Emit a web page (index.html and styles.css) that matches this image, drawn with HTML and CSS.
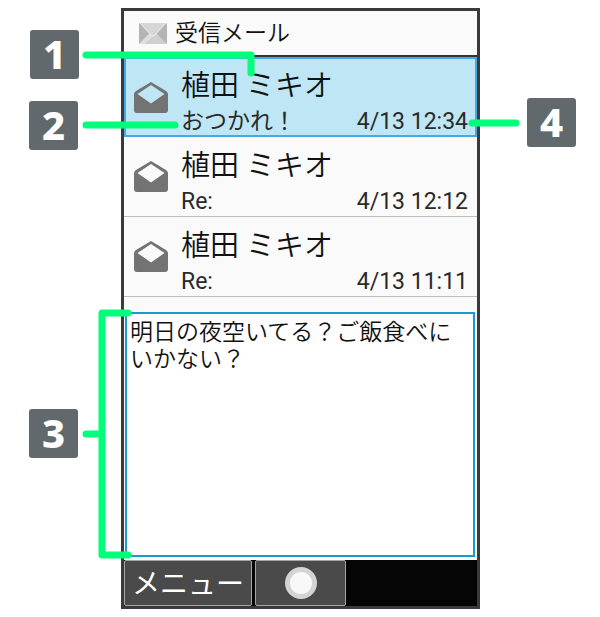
FILE: index.html
```html
<!DOCTYPE html>
<html lang="ja">
<head>
    <meta charset="UTF-8">
    <meta name="viewport" content="width=device-width, initial-scale=1.0">
    <title>受信メール</title>
    <link rel="stylesheet" href="styles.css">
</head>
<body>
    <!-- 開封済みアイコン -->
    <svg class="defs" width="0" height="0" aria-hidden="true">
        <symbol id="mailOpen" viewBox="0 0 34 31">
            <path fill="#737373" fill-rule="evenodd" d="M17 0 L32 9 Q34 10.500 34 12 V28 Q34 31 31 31 H3 Q0 31 0 28 V12 Q0 10.500 2 9 Z M17 3 L3.500 12 L17 21.500 L30.500 12 Z"/>
        </symbol>
    </svg>

    <div class="figure">
        <main class="phone">
            <header class="titleBar">
                <svg class="titleIcon" viewBox="0 0 28 21" aria-hidden="true">
                    <rect width="28" height="21" rx="1" fill="#b4b4b4"/>
                    <path d="M0 21 L10 11 H18 L28 21 Z" fill="#cfcfcf"/>
                    <path d="M0 21 L10 11 L14 13 L6 21 Z" fill="#dedede"/>
                    <path d="M1 0 H27 L16 12 Q14 14 12 12 Z" fill="#d6d6d6"/>
                    <path d="M1 0 L12 12 Q14 14 16 12 L27 0" fill="none" stroke="#eee"/>
                </svg>
                <h1>受信メール</h1>
            </header>

            <ul class="mailList">
                <li class="mail selected">
                    <svg class="mailIcon" aria-hidden="true"><use href="#mailOpen"/></svg>
                    <div class="mailText">
                        <div class="sender">植田 ミキオ</div>
                        <div class="info"><span>おつかれ！</span><time>4/13 12:34</time></div>
                    </div>
                </li>
                <li class="mail">
                    <svg class="mailIcon" aria-hidden="true"><use href="#mailOpen"/></svg>
                    <div class="mailText">
                        <div class="sender">植田 ミキオ</div>
                        <div class="info"><span>Re:</span><time>4/13 12:12</time></div>
                    </div>
                </li>
                <li class="mail">
                    <svg class="mailIcon" aria-hidden="true"><use href="#mailOpen"/></svg>
                    <div class="mailText">
                        <div class="sender">植田 ミキオ</div>
                        <div class="info"><span>Re:</span><time>4/13 11:11</time></div>
                    </div>
                </li>
            </ul>

            <div class="preview">明日の夜空いてる？ご飯食べにいかない？</div>

            <footer class="softKeys">
                <button class="menuKey" type="button">メニュー</button>
                <button class="centerKey" type="button" aria-label="決定"><span class="dot"></span></button>
            </footer>
        </main>

        <!-- 引き出し線 -->
        <svg class="leaders" width="600" height="617" aria-hidden="true">
            <path d="M86 55 H251 V73"/>
            <path d="M86 125 H175"/>
            <path d="M128 313 H102 V555 H128 M86 434 H102"/>
            <path d="M472 123 H516"/>
        </svg>
        <span class="badge badge1">1</span>
        <span class="badge badge2">2</span>
        <span class="badge badge3">3</span>
        <span class="badge badge4">4</span>
    </div>
</body>
</html>
```

FILE: styles.css
```css
* {
    box-sizing: border-box;
}
body {
    margin: 0;
    background: #fff;
    color: #111;
    font-family: Roboto, "Noto Sans CJK JP", sans-serif;
    font-size: 23px;
    font-weight: 350;
}
.defs {
    position: absolute;
}
.figure {
    position: relative;
    display: flex;
    flex-direction: column;
    min-height: 100vh;
    padding: 8px 120px 8px 121px;
}
.phone {
    display: flex;
    flex-direction: column;
    flex: 1;
    border: 3px solid #3a3a3a;
    background: #fafafa;
}
.titleBar {
    display: flex;
    align-items: center;
    gap: 8px;
    height: 46px;
    padding-left: 15px;
    border-bottom: 2px solid #333;
}
.titleIcon {
    width: 28px;
    height: 21px;
}
.titleBar h1 {
    margin: 0;
    padding-top: 2px;
    font-size: 23px;
    font-weight: 350;
    line-height: 30px;
}
.mailList {
    list-style-type: none;
    margin: 0;
    padding: 0;
}
.mail {
    display: flex;
    align-items: center;
    gap: 13px;
    height: 80px;
    padding: 0 9px 0 10px;
    border-bottom: 1px solid #bdbdbd;
}
.mail.selected {
    padding: 0 7px 0 8px;
    border: 2px solid #45a9e8;
    background: #bee6f5;
}
.mailIcon {
    width: 34px;
    height: 31px;
}
.mailText {
    flex: 1;
    padding-top: 8px;
}
.sender {
    font-size: 29px;
    line-height: 42px;
}
.info {
    display: flex;
    justify-content: space-between;
    color: #2a2a2a;
    font-weight: 400;
    line-height: 30px;
}
.preview {
    flex: 1;
    margin: 15px 2px 3px 1px;
    padding: 5px 3px;
    border: 2px solid #1a9bd0;
    background: #fff;
    line-height: 27px;
}
.softKeys {
    display: flex;
    gap: 3px;
    height: 46px;
    background: #050505;
}
.softKeys button {
    display: flex;
    align-items: center;
    justify-content: center;
    padding: 0;
    border: 1px solid #a5a5a5;
    border-radius: 2px;
    background: #4a4a4a;
    color: #fff;
    font-family: inherit;
    font-size: 28px;
    line-height: 40px;
}
.softKeys .menuKey {
    width: 128px;
    padding-top: 3px;
}
.centerKey {
    width: 91px;
}
.dot {
    width: 32px;
    height: 32px;
    border: 5px solid #d4d4d4;
    border-radius: 50%;
    background: #f8f8f8;
}

/* 番号と引き出し線 */
.leaders {
    position: absolute;
    top: 0;
    left: 0;
}
.leaders path {
    fill: none;
    stroke: #00ff7b;
    stroke-width: 7;
    stroke-linecap: round;
    stroke-linejoin: round;
}
.badge {
    position: absolute;
    width: 49px;
    height: 49px;
    border-radius: 3px;
    background: #62696c;
    color: #fff;
    font-family: "Noto Sans", sans-serif;
    font-size: 40px;
    font-weight: 800;
    line-height: 48px;
    text-align: center;
}
.badge1 {
    top: 30px;
    left: 30px;
}
.badge2 {
    top: 101px;
    left: 29px;
}
.badge3 {
    top: 409px;
    left: 29px;
}
.badge4 {
    top: 98px;
    left: 527px;
}
```
